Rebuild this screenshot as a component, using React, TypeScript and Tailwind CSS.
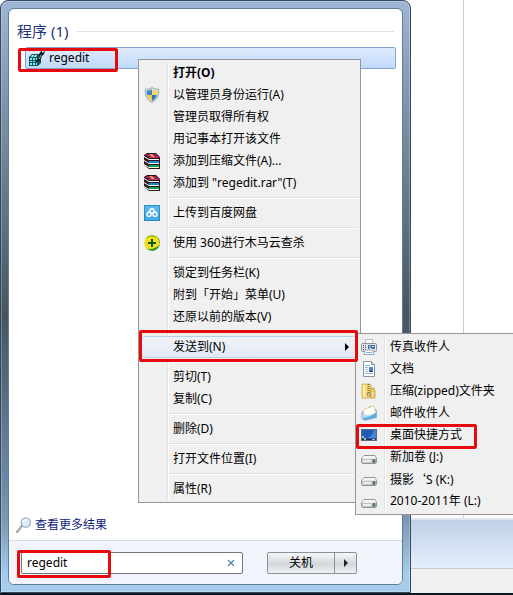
import type { ReactNode } from 'react';

const Svg = ({ children, size = 16 }: { children: ReactNode; size?: number }) => (
  <svg width={size} height={size} viewBox="0 0 16 16" aria-hidden="true" className="block shrink-0">
    {children}
  </svg>
);

const RegeditIcon = () => (
  <Svg>
    <path d="M0 7 3 4h7l2 2v7l-3 3H0z" fill="#0b5a60" />
    <path d="M1 8h2v2H1zM4 8h2v2H4zM7 8h1v2H7zM1 11h2v1H1zM4 11h2v1H4zM1 13h2v2H1zM4 13h2v2H4zM7 13h1v2H7z" fill="#7df0f0" />
    <path d="M3 5h2L4 7H2zM6 5h2L7 7H5z" fill="#c0f8f6" />
    <path d="m7 11 3-4V4l3-4v3l3-2-1 3-2 2-2 5-2 1z" fill="#10181c" />
    <path d="m10 9 2-4" stroke="#9fb0b5" strokeWidth="1" />
  </Svg>
);

const ShieldIcon = () => (
  <Svg>
    <path d="M8 .5C6 2 3.800 2.300 1.300 2.300c-.3 6 1.200 10.200 6.700 13.200 5.500-3 7-7.200 6.700-13.200C12.200 2.300 10 2 8 .5z" fill="#d5dce4" stroke="#8695a5" strokeWidth=".8" />
    <path d="M8 2.200C6.200 3.200 4.600 3.600 2.700 3.700c0 1.500 0 3 .5 4.300H8z" fill="#3c86d0" />
    <path d="M8 2.200c1.800 1 3.400 1.400 5.300 1.500 0 1.500 0 3-.5 4.300H8z" fill="#f6d95a" />
    <path d="M3.200 8H8v6c-2.700-1.500-4.100-3.400-4.800-6z" fill="#f4cc3e" />
    <path d="M12.800 8H8v6c2.700-1.500 4.100-3.400 4.800-6z" fill="#3178c4" />
  </Svg>
);

const RarIcon = () => (
  <Svg>
    <path d="M0 2 3 0h9l4 4v12H5l-5-4z" fill="#2a1522" />
    <path d="m1 2 2-1h9l3 3H5z" fill="#a81a5c" />
    <path d="M5 1h3l3 3H8z" fill="#e0ad45" />
    <path d="M5 4h10v1H5z" fill="#d02c7c" />
    <path d="M5 6h10v1H5zM5 10h10v1H5zM5 14h10v1H5z" fill="#fffbe8" />
    <path d="M5 8h10v2H5z" fill="#1b86cc" />
    <path d="M5 12h10v2H5z" fill="#0fa257" />
    <path d="M0 4l5 3V6L0 3zM0 8l5 3v-1L0 7zM0 12l5 3v-1L0 11z" fill="#fffbe8" />
  </Svg>
);

const CloudIcon = () => (
  <Svg>
    <rect x=".5" y=".5" width="15" height="15" fill="#45aae6" stroke="#2d8dc6" />
    <path d="M1 1h14v6H1z" fill="#5cb8ec" />
    <g fill="none" stroke="#fff" strokeWidth="1.400">
      <circle cx="8" cy="6" r="2.200" />
      <circle cx="5" cy="9.300" r="2.100" />
      <circle cx="11" cy="9.300" r="2.100" />
    </g>
  </Svg>
);

const Safe360Icon = () => (
  <Svg>
    <circle cx="8" cy="8" r="7.800" fill="#f2e01f" />
    <path d="M1.500 3.600C4.500-.8 11.500-.6 14 3 10 1.200 5.500 1.400 1.500 3.600z" fill="#8fb51c" />
    <path d="M15.700 9.500C14 16 7 17.500 3 13.800c5 .8 9.500-.8 12.700-4.300z" fill="#2e9a2c" />
    <path d="M12.500 1.600c3.500 2.200 4 6 2.600 8.600.3-3-.3-6-2.600-8.600z" fill="#4bab2b" />
    <path d="M7 4h2v3h3v2H9v3H7V9H4V7h3z" fill="#0f5a1a" />
  </Svg>
);

const FaxIcon = () => (
  <Svg>
    <path d="M4.500.5h7V5h-7z" fill="#fafcfe" stroke="#b3c0cb" />
    <rect x=".5" y="4.500" width="15" height="8" rx="1" fill="#e1e5ea" stroke="#8a949e" />
    <rect x="7" y="6" width="7" height="4" fill="#4f7198" />
    <path d="M8 7h2v1H8zM11 7h2v1h-2zM8 9h3v1H8z" fill="#b4dcf5" />
    <path d="M2 6h1v1H2zM4 6h1v1H4zM2 8h1v1H2zM4 8h1v1H4zM2 10h1v1H2zM4 10h1v1H4z" fill="#4b5661" />
    <path d="M4 11h8l1 4.500H3z" fill="#fbfdff" stroke="#98a5b1" />
    <path d="M5 13h6v1H5z" fill="#7bb7e2" />
  </Svg>
);

const DocIcon = () => (
  <Svg>
    <path d="M2.500.5h8l3 3v12h-11z" fill="#fbfdff" stroke="#8593a1" />
    <path d="M10.500.5v3h3" fill="#d6e0ea" stroke="#8593a1" />
    <path d="M4 4.500h5M4 6.500h3M4 8.500h3M4 10.500h3M4 12.500h8" stroke="#9fb6cd" />
    <rect x="8" y="6" width="4" height="5" fill="#4a88c8" />
    <path d="m8 11 2-2 2 2z" fill="#234c74" />
  </Svg>
);

const ZipIcon = () => (
  <Svg>
    <path d="M1 1h8l1 1v13H1z" fill="#f5da78" stroke="#cfab4b" strokeWidth=".8" />
    <path d="M9.500 5H13l1 3v7H9.500z" fill="#ecc85a" stroke="#c5a040" strokeWidth=".8" />
    <path d="M2 2h2v12H2z" fill="#fff0a6" />
    <path d="M7.500 1v9" stroke="#7a6e55" strokeWidth="2" strokeDasharray="1 1" />
    <path d="M6.500 10h2v3h-2z" fill="#e4e1d4" stroke="#8a7b55" strokeWidth=".7" />
    <path d="M12 9v5" stroke="#fff0b5" />
  </Svg>
);

const MailIcon = () => (
  <Svg>
    <path d="M.8 7.500 9 1.500l6.500 4v7L4 15.300.8 13.500z" fill="#8cc5ea" stroke="#6aa6cf" strokeWidth=".7" />
    <path d="M2.500 4.500 12.500 1l2.500 7-9 4-3.500-3z" fill="#fffdf6" stroke="#ecc188" strokeWidth=".8" />
    <path d="M.8 8c3 3.500 10.500 3 14.700-1.500v6L4 15.300.8 13.500z" fill="#a9d9f6" />
    <path d="M.8 13.500C6 12.500 11 11 15.500 7.500v5L4 15.300z" fill="#5fabdf" />
  </Svg>
);

const DesktopIcon = () => (
  <Svg>
    <rect x=".5" y="2.500" width="15" height="11" fill="#2259b3" stroke="#5c6c7e" />
    <path d="M15 3v8H7c3-2 5-5 6-8z" fill="#4484d6" />
    <path d="M1 12h14v1H1z" fill="#1b2b3c" />
    <path d="M1 9h2v2H1zM3 11h2v2H3z" fill="#8ec4cc" />
    <path d="M11 12.500h3" stroke="#a6b7c8" />
  </Svg>
);

const DriveIcon = () => (
  <Svg>
    <path d="m3 6.500-2.500 3v4l1 1h13l1-1v-4L14 6.500z" fill="#d8d8d8" stroke="#7d8183" strokeWidth=".8" />
    <path d="M3 7h11l1 2.500H1z" fill="#f5f5f5" />
    <path d="M1 10h14v4H2l-1-1z" fill="#c0c4c5" />
    <path d="M2 12h8" stroke="#ededed" strokeWidth="2" />
    <path d="M12 10.500h2v3h-2z" fill="#3a9b45" stroke="#4a6650" strokeWidth=".6" />
  </Svg>
);

const SearchIcon = () => (
  <Svg>
    <path d="m1.200 14.800 5-6" stroke="#8a8f95" strokeWidth="2.200" strokeLinecap="round" />
    <path d="m1.200 14.500 4.500-5" stroke="#d9dcdf" strokeWidth="1" />
    <circle cx="9.800" cy="5.500" r="4.700" fill="#d9edfa" stroke="#9cabb9" strokeWidth="1.200" />
    <path d="M6.800 5c.5-2 2-2.500 4-2" stroke="#fff" strokeWidth="1.300" fill="none" />
  </Svg>
);

type Entry = { label: ReactNode; icon?: ReactNode; bold?: boolean; sub?: boolean };

const groups: Entry[][] = [
  [
    { label: '打开(O)', bold: true },
    { label: '以管理员身份运行(A)', icon: <ShieldIcon /> },
    { label: '管理员取得所有权' },
    { label: '用记事本打开该文件' },
    { label: '添加到压缩文件(A)...', icon: <RarIcon /> },
    { label: '添加到 "regedit.rar"(T)', icon: <RarIcon /> },
  ],
  [{ label: '上传到百度网盘', icon: <CloudIcon /> }],
  [{ label: '使用 360进行木马云查杀', icon: <Safe360Icon /> }],
  [{ label: '锁定到任务栏(K)' }, { label: '附到「开始」菜单(U)' }, { label: '还原以前的版本(V)' }],
  [{ label: '发送到(N)', sub: true }],
  [{ label: '剪切(T)' }, { label: '复制(C)' }],
  [{ label: '删除(D)' }],
  [{ label: '打开文件位置(I)' }],
  [{ label: '属性(R)' }],
];

const targets: Entry[] = [
  { label: '传真收件人', icon: <FaxIcon /> },
  { label: '文档', icon: <DocIcon /> },
  { label: '压缩(zipped)文件夹', icon: <ZipIcon /> },
  { label: '邮件收件人', icon: <MailIcon /> },
  { label: '桌面快捷方式', icon: <DesktopIcon /> },
  { label: '新加卷 (J:)', icon: <DriveIcon /> },
  { label: <>摄影<span className="font-['Noto_Sans_CJK_SC',sans-serif]">‘</span>S (K:)</>, icon: <DriveIcon /> },
  { label: '2010-2011年 (L:)', icon: <DriveIcon /> },
];

const MenuItem = ({ label, icon, bold, sub }: Entry) => (
  <button
    type="button"
    role="menuitem"
    aria-haspopup={sub ? 'menu' : undefined}
    className={`flex h-[22px] w-full items-center whitespace-nowrap text-left ${bold ? 'font-bold' : ''} ${
      sub ? 'rounded-sm border border-[#b4d0ef] bg-linear-to-b from-[#f0f3f8] to-[#e3eaf5]' : 'border border-transparent'
    }`}
  >
    <span className="flex w-[31px] shrink-0 pl-0.5">{icon}</span>
    <span className="flex-1">{label}</span>
    {sub && <span className="mr-2 border-y-4 border-l-4 border-y-transparent border-l-black" />}
  </button>
);

const menuBox = 'absolute border border-[#979797] bg-[#f0f0f0] p-0.5';

const Gutter = () => (
  <div className="pointer-events-none absolute inset-y-0.5 left-[28px] w-0.5 border-l border-[#e2e3e3] bg-white" />
);

const Mark = ({ place }: { place: string }) => (
  <div className={`pointer-events-none absolute rounded-xs border-3 border-[#e60a0f] ${place}`} />
);

export default function App() {
  return (
    <div className="relative flex h-screen w-full overflow-hidden border-b-2 border-[#0c1622] bg-white font-['Noto_Sans','Noto_Sans_CJK_SC',sans-serif] text-xs text-black">
      <section className="flex w-[411px] shrink-0 flex-col rounded-t-lg border border-[#34495e] bg-[linear-gradient(#9db6d5,#8299b2_15%,#46555f_53%,#6b86a6_80%,#7d98b5_88%,#a5cbed_97%)] p-[7px] shadow-[inset_0_0_0_1px_rgba(255,255,255,0.25)]">
        <div className="flex flex-1 flex-col overflow-hidden rounded-md border border-[#5f7d97] bg-white">
          <div className="flex flex-1 flex-col pt-[11px]">
            <div className="flex items-center gap-2 px-2">
              <h1 className="text-[15px] leading-[22px] text-[#1e3278]">程序 (1)</h1>
              <div className="h-px flex-1 bg-[#dce2ed]" />
            </div>
            <button
              type="button"
              className="mt-[5px] mr-1.5 ml-4 flex h-[22px] items-center gap-1 rounded-xs border border-[#84a4cd] bg-linear-to-b from-[#dfebfd] to-[#c0dafb] pl-[3px]"
            >
              <RegeditIcon />
              <span>regedit</span>
            </button>
            <a href="#more" className="mt-auto mb-[5px] flex items-center gap-[3px] pl-[7px] leading-5 text-[#10247a]">
              <SearchIcon />
              查看更多结果
            </a>
          </div>
          <footer className="flex h-11 shrink-0 items-start gap-6 border-t border-[#d2dbe5] bg-[#f1f4fb] pt-[11px] pl-3">
            <div className="flex h-[22px] w-[222px] items-center rounded-xs border border-[#6f7780] bg-white pr-[7px] pl-[5px]">
              <input aria-label="搜索程序和文件" defaultValue="regedit" className="min-w-0 flex-1 outline-none" />
              <button type="button" aria-label="清除">
                <svg width="8" height="8" viewBox="0 0 8 8" className="block">
                  <path d="m1 1 6 6M7 1 1 7" stroke="#4f83ae" strokeWidth="1.200" />
                </svg>
              </button>
            </div>
            <div className="flex h-[22px] w-[90px] rounded-xs border border-[#8b9097] bg-linear-to-b from-[#f6f7f9] via-[#d4d7dc] via-55% to-[#eef0f4]">
              <button type="button" className="flex-1 border-r border-[#8b9097]">
                关机
              </button>
              <button type="button" aria-label="关机选项" className="flex w-[21px] items-center justify-center">
                <span className="border-y-4 border-l-4 border-y-transparent border-l-[#222222]" />
              </button>
            </div>
          </footer>
        </div>
      </section>

      <aside className="flex min-w-0 flex-1 flex-col">
        <div className="ml-[52px] flex-1 border-l border-[#c4d0da]" />
        <div className="h-[51px] border-t-2 border-b border-t-[#dfe6ed] border-b-[#c3ccd6] bg-linear-to-b from-[#c0d2e7] to-[#e3eefc]" />
        <div className="h-6 bg-[#f0f0f0]" />
      </aside>

      <div role="menu" aria-label="文件" className={`${menuBox} top-[59px] left-[138px] w-[223px]`}>
        <Gutter />
        {groups.map((group, i) => (
          <div key={i} className="relative">
            {i > 0 && (
              <div className="flex h-2 items-center pl-7">
                <div className="h-0.5 flex-1 border-t border-[#dedede] bg-white" />
              </div>
            )}
            {group.map((entry, j) => (
              <MenuItem key={j} {...entry} />
            ))}
          </div>
        ))}
      </div>

      <div role="menu" aria-label="发送到" className={`${menuBox} -right-1 top-[333px] left-[355px]`}>
        <Gutter />
        <div className="relative">
          {targets.map((entry, i) => (
            <MenuItem key={i} {...entry} />
          ))}
        </div>
      </div>

      <Mark place="left-[18px] top-[48px] h-6 w-[100px]" />
      <Mark place="left-[139px] top-[330px] h-8 w-[219px]" />
      <Mark place="left-[356px] top-[424px] h-[25px] w-[121px]" />
      <Mark place="left-[17px] top-[550px] h-7 w-[94px]" />
    </div>
  );
}
